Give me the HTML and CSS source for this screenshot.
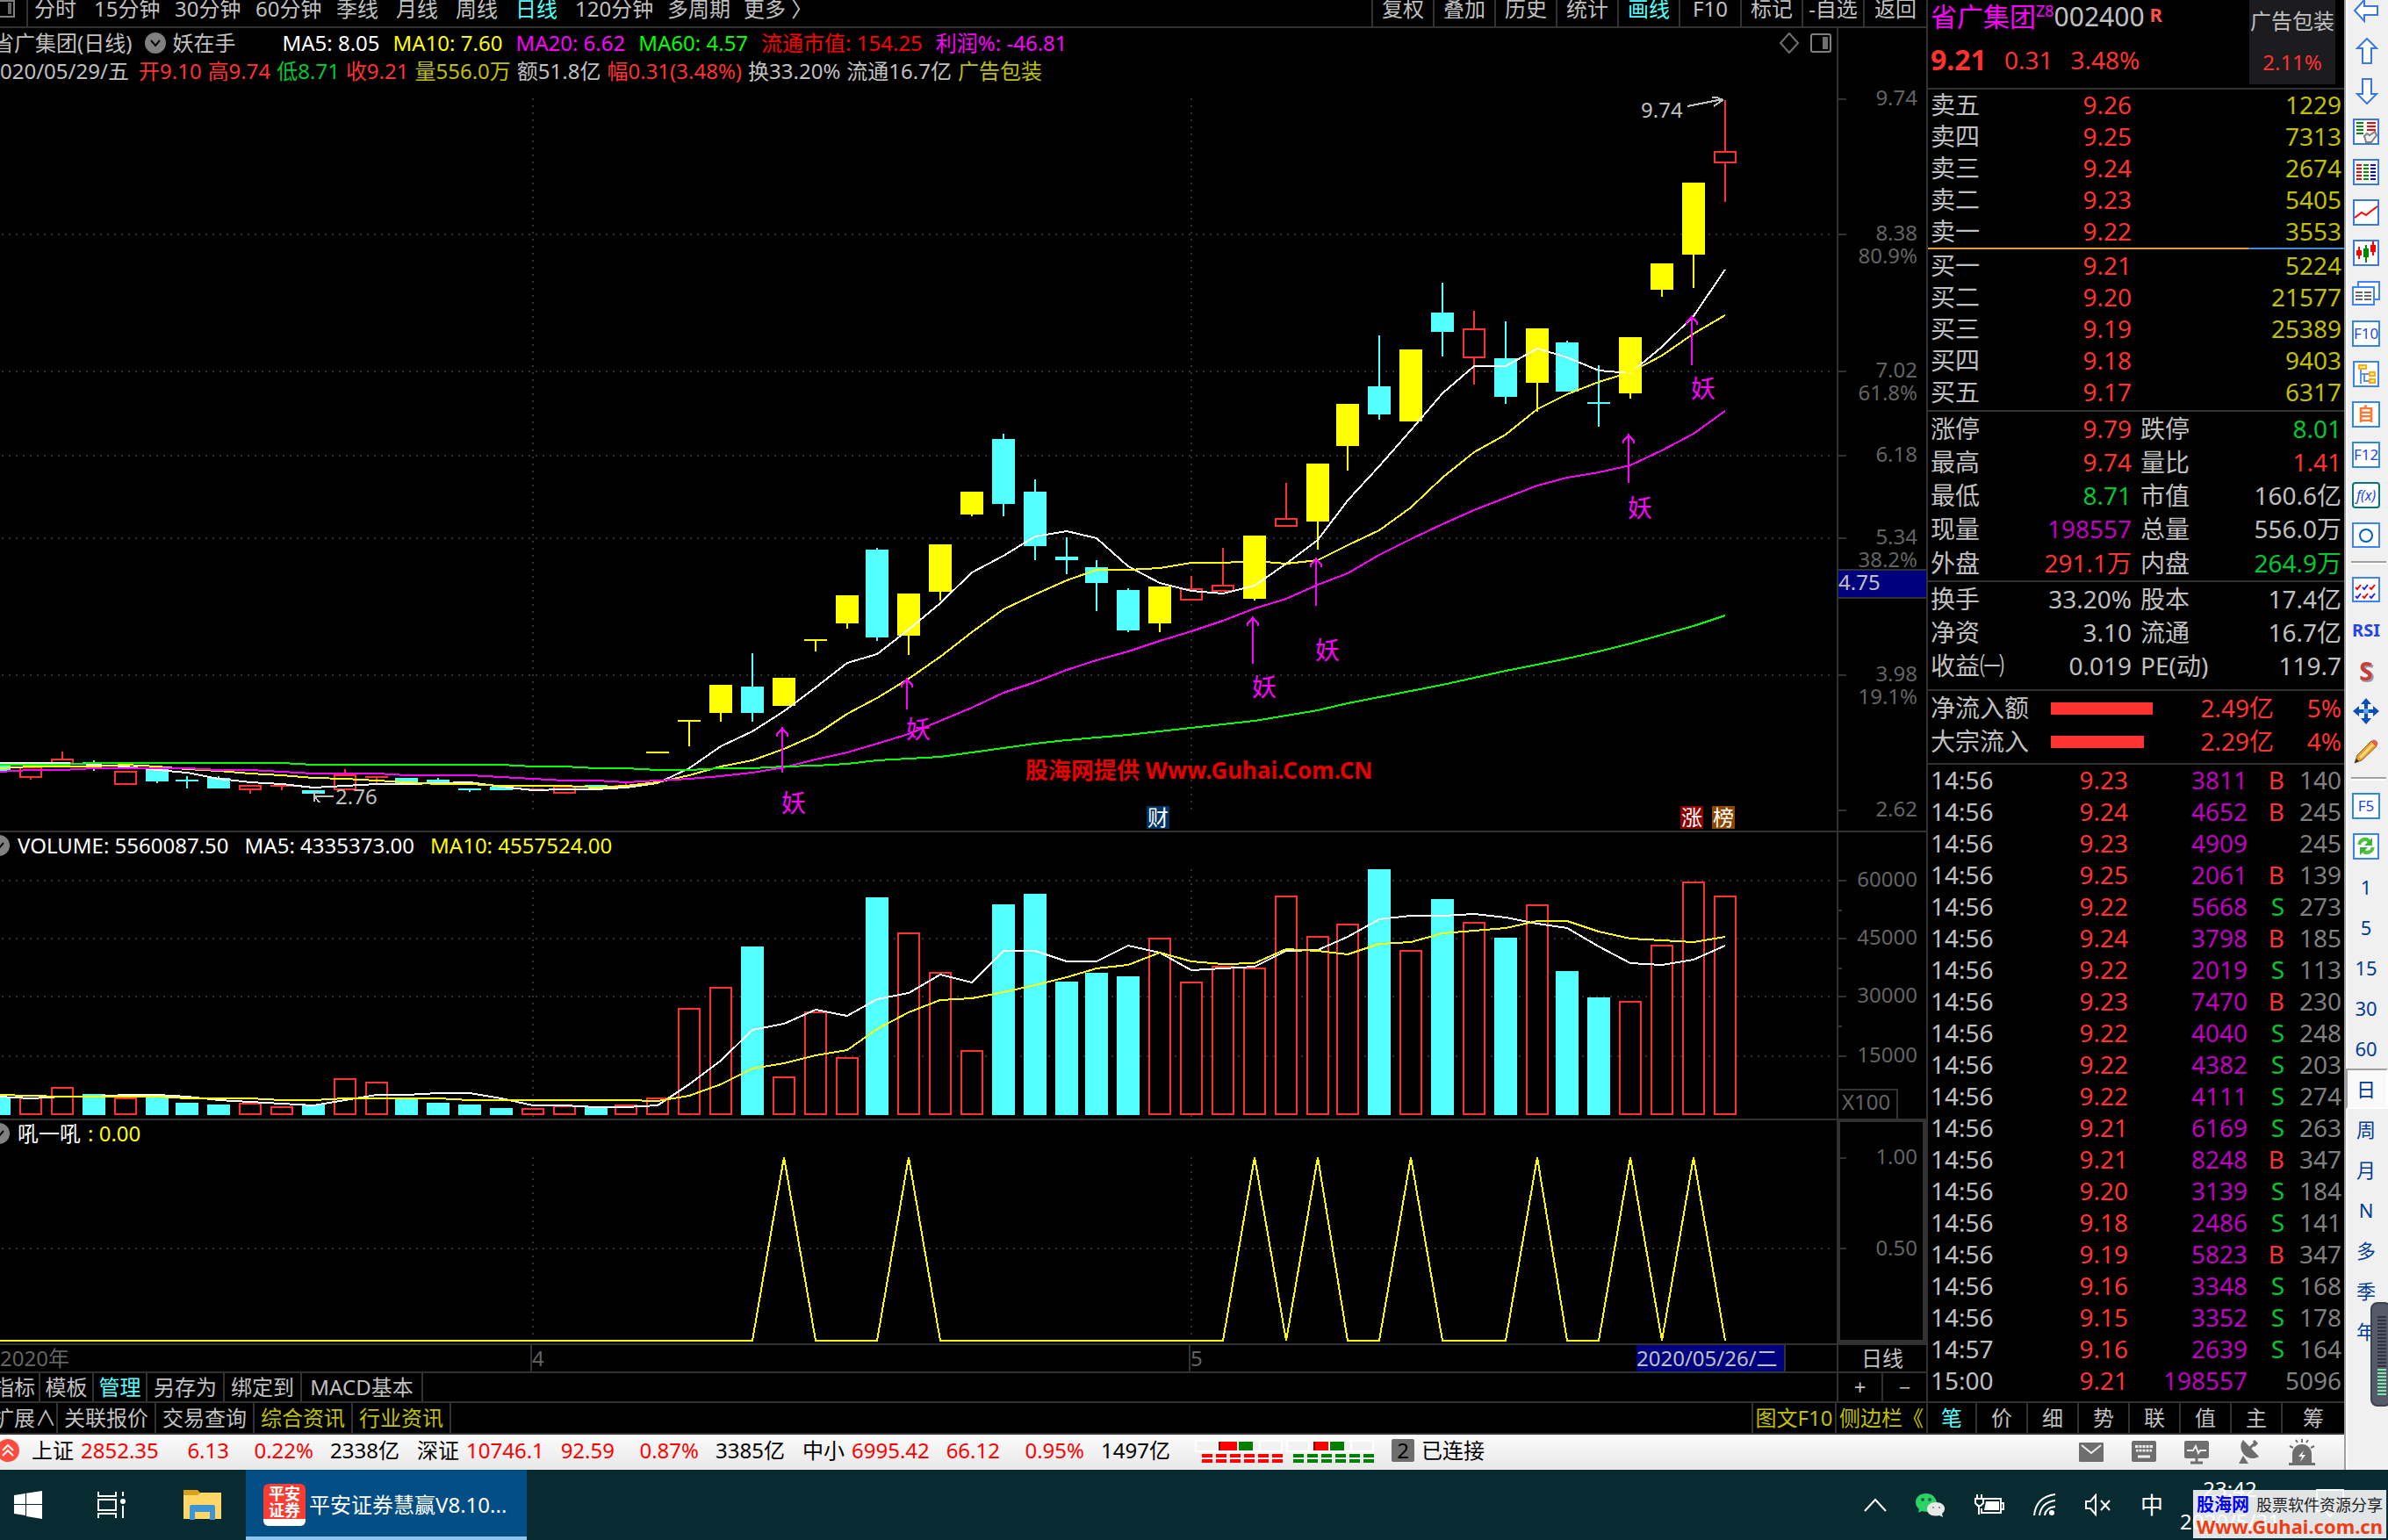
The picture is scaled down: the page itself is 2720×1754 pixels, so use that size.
FILE: index.html
```html
<!DOCTYPE html>
<html lang="zh-CN">
<head>
<meta charset="utf-8">
<title>平安证券慧赢 - 省广集团 002400</title>
<link rel="stylesheet" href="styles.css">
</head>
<body>
<div class="app">
  <main class="chart-area">
    <nav class="topbar">
      <button class="layout-btn" aria-label="布局"><svg width="18" height="22" viewBox="0 0 18 22"><path d="M0 1H16V19H0" fill="none" stroke="#808080" stroke-width="2"/><rect x="9" y="3" width="4" height="13" fill="#666"/></svg></button>
      <div class="periods">
        <button class="w2">分时</button><button class="w4">15分钟</button><button class="w4">30分钟</button><button class="w4">60分钟</button><button class="w2">季线</button><button class="w2">月线</button><button class="w2">周线</button><button class="w2 on">日线</button><button class="w5">120分钟</button><button class="w3">多周期</button><button class="w3">更多 〉</button>
      </div>
      <div class="tools">
        <button>复权</button><button>叠加</button><button>历史</button><button>统计</button><button class="on">画线</button><button>F10</button><button>标记</button><button>-自选</button><button>返回</button>
      </div>
    </nav>

    <section class="pane pane-price">
      <div class="plot">
        <div class="info">
          <div class="info-row">
            <span class="stock-name">省广集团(日线)</span>
            <button class="drop" aria-label="指标菜单"><svg width="24" height="24" viewBox="0 0 24 24"><circle cx="12" cy="12" r="12" fill="#808080"/><path d="M7 9l5 6 5-6" fill="none" stroke="#000" stroke-width="2"/></svg></button>
            <span class="ind-name">妖在手</span>
            <span class="c-white">MA5: 8.05</span><span class="c-yellow">MA10: 7.60</span><span class="c-magenta">MA20: 6.62</span><span class="c-lime">MA60: 4.57</span><span class="c-pure-red">流通市值: 154.25</span><span class="c-magenta">利润%: -46.81</span>
            <span class="corner-icons">
              <svg width="24" height="24" viewBox="0 0 24 24"><path d="M12 1L22 12 12 23 2 12Z" fill="none" stroke="#707070" stroke-width="2"/></svg>
              <svg width="24" height="24" viewBox="0 0 24 24"><rect x="1" y="2" width="22" height="20" rx="2" fill="none" stroke="#808080" stroke-width="2"/><rect x="14" y="5" width="6" height="14" fill="#707070"/></svg>
            </span>
          </div>
          <div class="info-row quote-row">
            <span class="quote-date">020/05/29/五</span><span class="c-red">开9.10</span><span class="c-red">高9.74</span><span class="c-green">低8.71</span><span class="c-red">收9.21</span><span class="c-olive">量556.0万</span><span>额51.8亿</span><span class="c-red">幅0.31(3.48%)</span><span>换33.20%</span><span>流通16.7亿</span><span class="c-olive">广告包装</span>
          </div>
        </div>
        <svg id="price" class="graph" viewBox="0 97 2092 849"></svg>
      </div>
      <svg id="price-axis" class="axis" viewBox="2092 32 102 914"></svg>
    </section>

    <section class="pane pane-volume">
      <div class="plot">
        <div class="sub-head">
          <button class="drop drop-cut" aria-label="成交量菜单"><svg width="24" height="24" viewBox="0 0 24 24"><circle cx="12" cy="12" r="12" fill="#808080"/><path d="M7 9l5 6 5-6" fill="none" stroke="#000" stroke-width="2"/></svg></button>
          <span class="c-white">VOLUME: 5560087.50</span><span class="c-white">MA5: 4335373.00</span><span class="c-yellow">MA10: 4557524.00</span>
        </div>
        <svg id="volume" class="graph" viewBox="0 978 2092 296"></svg>
      </div>
      <svg id="volume-axis" class="axis" viewBox="2092 948 102 326"></svg>
    </section>

    <section class="pane pane-signal">
      <div class="plot">
        <div class="sub-head">
          <button class="drop drop-cut" aria-label="信号菜单"><svg width="24" height="24" viewBox="0 0 24 24"><circle cx="12" cy="12" r="12" fill="#808080"/><path d="M7 9l5 6 5-6" fill="none" stroke="#000" stroke-width="2"/></svg></button>
          <span class="signal-name">吼一吼</span><span class="c-yellow">: 0.00</span>
        </div>
        <svg id="signal" class="graph" viewBox="0 1306 2092 224"></svg>
      </div>
      <svg id="signal-axis" class="axis" viewBox="2092 1276 102 254"></svg>
    </section>

    <div class="dates">
      <span class="year">2020年</span><span class="month m4">4</span><span class="month m5">5</span><span class="cursor-date">2020/05/26/二</span><span class="date-rest"></span><button class="scale-name">日线</button>
    </div>
    <div class="strip">
      <button class="k1"><span class="cut">指标</span></button><button class="k2">模板</button><button class="k2 on">管理</button><button class="k3">另存为</button><button class="k3">绑定到</button><button class="k5">MACD基本</button>
      <span class="grow"></span><button class="zoom-btn">+</button><button class="zoom-btn">−</button>
    </div>
    <div class="strip strip-last">
      <button class="k15"><span class="cut">扩展∧</span></button><button class="k4">关联报价</button><button class="k4">交易查询</button><button class="k4 c-olive">综合资讯</button><button class="k4 c-olive">行业资讯</button>
      <span class="grow"></span><button class="kf c-olive">图文F10</button><button class="ks c-olive">侧边栏《</button>
    </div>
  </main>

  <aside class="panel">
    <header class="quote-head">
      <div class="quote-main">
        <div class="quote-title"><span class="c-magenta">省广集团</span><sup class="c-magenta">Z8</sup><span>002400</span><b>R</b></div>
        <div class="quote-price"><strong>9.21</strong><span>0.31</span><span>3.48%</span></div>
      </div>
      <div class="sector"><span>广告包装</span><span class="c-red">2.11%</span></div>
    </header>
    <table class="book sell">
      <tr><th>卖五</th><td>9.26</td><td>1229</td></tr>
      <tr><th>卖四</th><td>9.25</td><td>7313</td></tr>
      <tr><th>卖三</th><td>9.24</td><td>2674</td></tr>
      <tr><th>卖二</th><td>9.23</td><td>5405</td></tr>
      <tr><th>卖一</th><td>9.22</td><td>3553</td></tr>
    </table>
    <div class="ratio"><span></span></div>
    <table class="book buy">
      <tr><th>买一</th><td>9.21</td><td>5224</td></tr>
      <tr><th>买二</th><td>9.20</td><td>21577</td></tr>
      <tr><th>买三</th><td>9.19</td><td>25389</td></tr>
      <tr><th>买四</th><td>9.18</td><td>9403</td></tr>
      <tr><th>买五</th><td>9.17</td><td>6317</td></tr>
    </table>
    <table class="facts">
      <tr><th>涨停</th><td class="c-red">9.79</td><th>跌停</th><td class="c-green">8.01</td></tr>
      <tr><th>最高</th><td class="c-red">9.74</td><th>量比</th><td class="c-red">1.41</td></tr>
      <tr><th>最低</th><td class="c-green">8.71</td><th>市值</th><td>160.6亿</td></tr>
      <tr><th>现量</th><td class="c-purple">198557</td><th>总量</th><td>556.0万</td></tr>
      <tr><th>外盘</th><td class="c-red">291.1万</td><th>内盘</th><td class="c-green">264.9万</td></tr>
    </table>
    <table class="facts facts-more">
      <tr><th>换手</th><td>33.20%</td><th>股本</th><td>17.4亿</td></tr>
      <tr><th>净资</th><td>3.10</td><th>流通</th><td>16.7亿</td></tr>
      <tr><th>收益㈠</th><td>0.019</td><th>PE(动)</th><td>119.7</td></tr>
    </table>
    <table class="flows">
      <tr><th>净流入额</th><td><span class="bar" style="width:116px"></span></td><td>2.49亿</td><td>5%</td></tr>
      <tr><th>大宗流入</th><td><span class="bar" style="width:106px"></span></td><td>2.29亿</td><td>4%</td></tr>
    </table>
    <table class="ticks">
      <tr><td>14:56</td><td>9.23</td><td>3811</td><td class="b">B</td><td>140</td></tr>
      <tr><td>14:56</td><td>9.24</td><td>4652</td><td class="b">B</td><td>245</td></tr>
      <tr><td>14:56</td><td>9.23</td><td>4909</td><td></td><td>245</td></tr>
      <tr><td>14:56</td><td>9.25</td><td>2061</td><td class="b">B</td><td>139</td></tr>
      <tr><td>14:56</td><td>9.22</td><td>5668</td><td class="s">S</td><td>273</td></tr>
      <tr><td>14:56</td><td>9.24</td><td>3798</td><td class="b">B</td><td>185</td></tr>
      <tr><td>14:56</td><td>9.22</td><td>2019</td><td class="s">S</td><td>113</td></tr>
      <tr><td>14:56</td><td>9.23</td><td>7470</td><td class="b">B</td><td>230</td></tr>
      <tr><td>14:56</td><td>9.22</td><td>4040</td><td class="s">S</td><td>248</td></tr>
      <tr><td>14:56</td><td>9.22</td><td>4382</td><td class="s">S</td><td>203</td></tr>
      <tr><td>14:56</td><td>9.22</td><td>4111</td><td class="s">S</td><td>274</td></tr>
      <tr><td>14:56</td><td>9.21</td><td>6169</td><td class="s">S</td><td>263</td></tr>
      <tr><td>14:56</td><td>9.21</td><td>8248</td><td class="b">B</td><td>347</td></tr>
      <tr><td>14:56</td><td>9.20</td><td>3139</td><td class="s">S</td><td>184</td></tr>
      <tr><td>14:56</td><td>9.18</td><td>2486</td><td class="s">S</td><td>141</td></tr>
      <tr><td>14:56</td><td>9.19</td><td>5823</td><td class="b">B</td><td>347</td></tr>
      <tr><td>14:56</td><td>9.16</td><td>3348</td><td class="s">S</td><td>168</td></tr>
      <tr><td>14:56</td><td>9.15</td><td>3352</td><td class="s">S</td><td>178</td></tr>
      <tr><td>14:57</td><td>9.16</td><td>2639</td><td class="s">S</td><td>164</td></tr>
      <tr><td>15:00</td><td>9.21</td><td>198557</td><td></td><td>5096</td></tr>
    </table>
    <nav class="panel-tabs">
      <button class="on">笔</button><button>价</button><button>细</button><button>势</button><button>联</button><button>值</button><button>主</button><button>筹</button>
    </nav>
  </aside>

  <footer class="status">
    <svg class="alert" width="22" height="26" viewBox="0 0 22 26"><circle cx="9" cy="13" r="13" fill="#ff4b3e"/><path d="M3 13l6-6 6 6M3 19l6-6 6 6" fill="none" stroke="#fff" stroke-width="2"/></svg>
    <div class="index"><span>上证</span><span class="up">2852.35</span><span class="up">6.13</span><span class="up">0.22%</span><span>2338亿</span></div>
    <div class="index"><span>深证</span><span class="up">10746.1</span><span class="up">92.59</span><span class="up">0.87%</span><span>3385亿</span></div>
    <div class="index"><span>中小</span><span class="up">6995.42</span><span class="up">66.12</span><span class="up">0.95%</span><span>1497亿</span></div>
    <svg class="meter" width="204" height="28" viewBox="0 0 204 28">
      <g fill="#f2f2f2" stroke="#fff" stroke-width="2"><rect x="1" y="1" width="98" height="12"/><rect x="105" y="1" width="98" height="12"/></g>
      <path d="M26 1v12M74 1v12M130 1v12M178 1v12" stroke="#fff" stroke-width="2"/>
      <rect x="27" y="2" width="2" height="10" fill="#800000"/><rect x="29" y="2" width="19" height="10" fill="#f00"/><rect x="50" y="2" width="16" height="10" fill="#008000"/>
      <rect x="135" y="2" width="2" height="10" fill="#800000"/><rect x="137" y="2" width="15" height="10" fill="#f00"/><rect x="154" y="2" width="16" height="10" fill="#008000"/>
      <path d="M8 18h92M8 24h92" stroke="#f00" stroke-width="4" stroke-dasharray="12 4"/>
      <path d="M112 18h92M112 24h92" stroke="#008000" stroke-width="4" stroke-dasharray="12 4"/>
    </svg>
    <span class="count">2</span><span>已连接</span>
    <div class="status-icons">
      <button aria-label="邮件"><svg width="28" height="28" viewBox="0 0 28 28"><rect y="3" width="28" height="22" rx="1" fill="#6e6e6e"/><path d="M3 6l11 9 11-9" fill="none" stroke="#eee" stroke-width="2"/></svg></button>
      <button aria-label="键盘"><svg width="28" height="28" viewBox="0 0 28 28"><rect y="1" width="28" height="24" rx="2" fill="#6e6e6e"/><path d="M4 7.500h20M5 12h18M7 19h14" stroke="#eee" stroke-width="3"/><path d="M4 10h20M8 6v8M12 6v8M16 6v8M20 6v8" stroke="#6e6e6e"/></svg></button>
      <button aria-label="行情监控"><svg width="28" height="28" viewBox="0 0 28 28"><rect y="1" width="28" height="20" rx="2" fill="#6e6e6e"/><path d="M3 12h7l3-5 3 8 2-3h7" fill="none" stroke="#eee" stroke-width="2"/><path d="M14 20v6M7 26h14" stroke="#6e6e6e" stroke-width="3"/></svg></button>
      <button aria-label="接收器"><svg width="28" height="28" viewBox="0 0 28 28"><path d="M7 0C-1 9 10 27 25 19Z" fill="#6e6e6e"/><path d="M14 10l6-6M19 1l3 3-3 3" fill="none" stroke="#6e6e6e" stroke-width="3"/><path d="M7 18L2 27h11z" fill="#6e6e6e"/></svg></button>
      <button aria-label="预警"><svg width="30" height="30" viewBox="0 0 30 30"><path d="M4 28V17a11 11 0 0 1 22 0v11z" fill="#6e6e6e"/><path d="M0 28.500h30" stroke="#6e6e6e" stroke-width="3"/><path d="M15 0v4M8 1l2 3M22 1l-2 3M1 8l4 2M29 8l-4 2" stroke="#6e6e6e" stroke-width="2"/><path d="M17 13l-6 7h4l-2 6 6-8h-4z" fill="#fff"/></svg></button>
    </div>
  </footer>

  <nav class="side">
    <button aria-label="后退"><svg width="30" height="30" viewBox="0 0 30 30"><path d="M2 15L13 3v7h15v10H13v7z" fill="#fff" stroke="#3a78dc" stroke-width="2"/></svg></button>
    <button aria-label="上翻"><svg width="30" height="30" viewBox="0 0 30 30"><path d="M16 1L27 12h-6v17H11V12H5z" fill="#fff" stroke="#3a78dc" stroke-width="2"/></svg></button>
    <button aria-label="下翻"><svg width="30" height="30" viewBox="0 0 30 30"><path d="M16 29L27 18h-6V1H11v17H5z" fill="#fff" stroke="#3a78dc" stroke-width="2"/></svg></button>
    <button aria-label="自选报价"><svg width="30" height="30" viewBox="0 0 30 30"><rect x="1" y="1" width="28" height="28" fill="#fff" stroke="#3a78dc" stroke-width="2"/><path d="M4 5h8M4 9h8M4 13h8M4 17h8" stroke="#080" stroke-width="2"/><path d="M16 5h10M16 9h10M16 13h10" stroke="#f00" stroke-width="2"/><path d="M13 20l3-3 3 2 6-4 2 4-6 8h-6z" fill="#eee" stroke="#808080" stroke-width="2"/></svg></button>
    <button aria-label="行情列表"><svg width="30" height="30" viewBox="0 0 30 30"><rect x="1" y="1" width="28" height="28" fill="#fff" stroke="#3a78dc" stroke-width="2"/><path d="M4 7h6M4 11h6M4 15h6M4 19h6M4 23h6" stroke="#f00" stroke-width="2"/><path d="M12 7h6M12 11h6M12 15h6M12 19h6M12 23h6" stroke="#080" stroke-width="2"/><path d="M20 7h6M20 11h6M20 15h6M20 19h6M20 23h6" stroke="#00f" stroke-width="2"/></svg></button>
    <button aria-label="分时图"><svg width="30" height="30" viewBox="0 0 30 30"><rect x="1" y="1" width="28" height="28" fill="#fff" stroke="#3a78dc" stroke-width="2"/><path d="M2 21l8-6 5 3 5-4 8-6" fill="none" stroke="#f00" stroke-width="2"/></svg></button>
    <button aria-label="K线图"><svg width="30" height="30" viewBox="0 0 30 30"><rect x="1" y="1" width="28" height="28" fill="#fff" stroke="#3a78dc" stroke-width="2"/><path d="M7 8v14M23 2v16" stroke="#f00" stroke-width="2"/><path d="M4 12h6v6H4zM20 6h6v8h-6z" fill="#f00"/><path d="M15 6v20" stroke="#080" stroke-width="2"/><path d="M12 10h6v10h-6z" fill="#080"/></svg></button>
    <button aria-label="资料"><svg width="32" height="30" viewBox="0 0 32 30"><rect x="7" y="2" width="24" height="20" fill="#fff" stroke="#3f82ff" stroke-width="2"/><rect x="1" y="8" width="24" height="20" fill="#fff" stroke="#3f82ff" stroke-width="2"/><path d="M4 14h8M4 18h8M4 22h8M14 14h8M14 18h8M14 22h8" stroke="#666" stroke-width="2"/></svg></button>
    <button class="boxed">F10</button>
    <button aria-label="板块树"><svg width="30" height="30" viewBox="0 0 30 30"><rect x="1" y="1" width="28" height="28" fill="#fff" stroke="#3a82f0" stroke-width="2"/><path d="M9 10v16M10 15h8M13 15v8h5" fill="none" stroke="#5a90f0" stroke-width="2"/><path d="M7 5h8v4H7zM19 13h6v4h-6zM19 21h6v4h-6z" fill="#ffff60" stroke="#ffa824" stroke-width="2"/></svg></button>
    <button class="boxed orange">自</button>
    <button class="boxed">F12</button>
    <button class="boxed teal">f(x)</button>
    <button aria-label="圈选"><svg width="32" height="30" viewBox="0 0 32 30"><rect x="1" y="1" width="30" height="27" fill="#fff" stroke="#3f82ff" stroke-width="2"/><circle cx="16" cy="15" r="7" fill="none" stroke="#0060c0" stroke-width="2"/></svg></button>
    <hr>
    <button aria-label="多图"><svg width="32" height="30" viewBox="0 0 32 30"><rect x="1" y="1" width="30" height="27" fill="#fff" stroke="#3f82ff" stroke-width="2"/><g fill="none" stroke-width="2"><path d="M4 12l2 2 4-5M20 12l2 2 4-5M12 22l2 2 4-5" stroke="#f00"/><path d="M12 12l2 2 4-5M4 22l2 2 4-5M20 22l2 2 4-5" stroke="#22f"/></g></svg></button>
    <button class="rsi">RSI</button>
    <button class="dollar">S</button>
    <button aria-label="移动"><svg width="30" height="30" viewBox="0 0 30 30"><path d="M15 0l6 7h-4v6h6V9l7 6-7 6v-4h-6v6h4l-6 7-6-7h4v-6H7v4l-7-6 7-6v4h6V7H9z" fill="#0a50b8"/><circle cx="15" cy="15" r="3" fill="#6af"/></svg></button>
    <button aria-label="画笔"><svg width="30" height="30" viewBox="0 0 30 30"><path d="M2 28l3-9L21 3l6 6L10 25z" fill="#e8a030" stroke="#8a6420"/><path d="M8 22L23 7" stroke="#ffd880" stroke-width="3"/><path d="M21 3q3-3 6 0t0 6z" fill="#e06060"/><path d="M2 28l2-5 3 3z" fill="#333"/></svg></button>
    <hr>
    <button class="boxed">F5</button>
    <button aria-label="刷新"><svg width="30" height="30" viewBox="0 0 30 30"><rect x="1" y="1" width="28" height="28" fill="#fff" stroke="#3a82f0" stroke-width="2"/><path d="M7 13q2-7 9-6l3 3M23 16q-2 7-9 6l-3-3" fill="none" stroke="#52c040" stroke-width="4"/><path d="M22 5v9h-9zM8 25v-9h9z" fill="#3cb43c"/></svg></button>
    <button>1</button><button>5</button><button>15</button><button>30</button><button>60</button>
    <button class="pressed">日</button><button>周</button><button>月</button><button>N</button><button>多</button><button>季</button><button>年</button>
    <div class="gauge"><i></i><i></i></div>
  </nav>
</div>

<footer class="taskbar">
  <button class="tb" aria-label="开始"><svg width="32" height="32" viewBox="0 0 32 32"><path d="M0 5l13-2v12H0zM14 2.800L32 0v15H14zM0 16h13v12L0 26zM14 16h18v16l-18-3z" fill="#fff"/></svg></button>
  <button class="tb tb-view" aria-label="任务视图"><svg width="34" height="30" viewBox="0 0 34 30"><g fill="none" stroke="#fff" stroke-width="2"><path d="M1 0v5h20V0M1 30v-5h20v5M1 9h20v12H1zM29 0v5M29 16v14"/></g><circle cx="29" cy="11" r="3" fill="#fff"/></svg></button>
  <button class="tb tb-files" aria-label="文件资源管理器"><svg width="44" height="36" viewBox="0 0 44 36"><path d="M1 1h16l4 4h21q2 0 2 2v27H1z" fill="#d9a215"/><path d="M1 7h16l4-3h23v30H1z" fill="#ffd767"/><path d="M8 35V20q0-2 2-2h25q2 0 2 2v15h-6v-9H14v9z" fill="#3d95d8"/></svg></button>
  <button class="task"><span class="app-icon"><span>平安</span><span>证券</span><small></small></span>平安证券慧赢V8.10...</button>
  <div class="tray">
    <svg width="26" height="16" viewBox="0 0 26 16"><path d="M1 15L13 2l12 13" fill="none" stroke="#fff" stroke-width="2"/></svg>
    <svg width="34" height="28" viewBox="0 0 34 28"><path d="M12 1C5 1 0 5 0 11c0 4 2 6 4 8l-1 4 4-2c12 3 18-4 17-10C23 5 18 1 12 1z" fill="#2bd366"/><path d="M23 11c-6 0-10 3-10 8s5 9 14 7l4 2-1-4c6-5 3-13-7-13z" fill="#e8e8e8"/><g fill="#156b38"><circle cx="8" cy="8" r="2"/><circle cx="16" cy="8" r="2"/></g><g fill="#777"><circle cx="20" cy="17" r="1"/><circle cx="27" cy="17" r="1"/></g></svg>
    <svg width="34" height="26" viewBox="0 0 34 26"><path d="M8 6h22v16H8V17M30 11h3v7h-3" fill="none" stroke="#fff" stroke-width="2"/><path d="M13 9h15v10H11z" fill="#fff"/><path d="M3 1v5M8 1v5M1 6h9v5l-3 3H4l-3-3zM5 14v10" fill="none" stroke="#fff" stroke-width="2"/></svg>
    <svg width="26" height="26" viewBox="0 0 26 26"><g fill="none" stroke="#fff" stroke-width="2"><path d="M1 25Q3 4 25 1M7 25Q9 10 25 8M13 25q1-9 12-10"/></g><circle cx="21" cy="22" r="3" fill="#fff"/></svg>
    <svg width="30" height="26" viewBox="0 0 30 26"><path d="M1 9h5l6-7v22l-6-7H1zM18 8l10 11M28 8L18 19" fill="none" stroke="#fff" stroke-width="2"/></svg>
    <span class="ime">中</span>
    <div class="clock"><span>23:42</span><span>2020/5/31</span></div>
    <svg class="notice" width="32" height="36" viewBox="0 0 32 36"><path d="M1 1h30v24H21l-5 6-5-6H1z" fill="none" stroke="#fff" stroke-width="2"/></svg>
  </div>
  <a class="site-badge" href="#"><span class="site-top"><b>股海网</b><span>股票软件资源分享</span></span><strong>Www.Guhai.com.cn</strong></a>
</footer>
<script src="chart.js"></script>
</body>
</html>
```

FILE: styles.css
```css
* { box-sizing: border-box; margin: 0; padding: 0; }

body {
  min-height: 100vh;
  background: #000;
  color: #c0c0c0;
  font: 24px/32px "Noto Sans", "Noto Sans CJK SC", sans-serif;
  overflow-x: hidden;
}

button {
  font: inherit;
  color: inherit;
  background: none;
  border: 0;
  white-space: nowrap;
}

svg { display: block; flex: none; }
table { border-collapse: collapse; table-layout: fixed; width: 100%; }
th { font-weight: 400; text-align: left; }

.c-white { color: #fff; }
.c-yellow { color: #ff0; }
.c-magenta { color: #f0f; }
.c-purple { color: #c000c0; }
.c-lime { color: #0f0; }
.c-green { color: #00c832; }
.c-red { color: #ff3232; }
.c-pure-red { color: #f00; }
.c-olive { color: #c0c000; }
.on { color: #54ffff; }

.app {
  display: grid;
  grid-template-columns: minmax(0, 1fr) 476px 50px;
  grid-template-rows: auto 40px;
}
.chart-area { display: flex; flex-direction: column; min-width: 0; }

/* top menu */
.topbar {
  display: flex;
  height: 32px;
  border-bottom: 2px solid #323232;
  overflow: hidden;
}
.topbar button { line-height: 20px; height: 30px; padding-bottom: 10px; }
.layout-btn { width: 32px; border-right: 2px solid #323232; }
.periods { display: flex; padding-left: 7px; }
.periods button { text-align: left; }
.w2 { width: 68px; }
.w3 { width: 87px; }
.w4 { width: 92px; }
.w5 { width: 105px; }
.tools { display: flex; margin-left: auto; }
.tools button { width: 70px; border-left: 2px solid #323232; }
.tools button:last-child { width: 72px; }

/* chart panes */
.pane {
  display: grid;
  grid-template-columns: minmax(0, 1fr) 102px;
  border-bottom: 2px solid #323232;
}
.graph, .axis { width: 100%; height: auto; }
.graph text, .axis text { font-size: 24px; }
.info { padding-top: 1px; }
.info-row { display: flex; align-items: center; height: 32px; gap: 15px; white-space: nowrap; }
.stock-name { margin-left: -8px; }
.ind-name { width: 110px; margin-left: -8px; }
.drop { height: 24px; }
.drop-cut { margin-left: -13px; margin-right: -9px; }
.corner-icons { display: flex; gap: 12px; margin-left: auto; padding-right: 6px; }
.quote-row { gap: 7px; }
.quote-date { width: 151px; }
.sub-head { display: flex; align-items: center; height: 30px; gap: 18px; white-space: nowrap; }
.signal-name { margin-right: -10px; color: #fff; }

/* date scale and tool strips */
.dates { display: flex; height: 32px; line-height: 30px; border-bottom: 2px solid #323232; color: #646464; }
.year { width: 604px; }
.month { border-left: 2px solid #323232; }
.m4 { width: 750px; }
.m5 { width: 510px; }
.cursor-date { width: 168px; color: #c0c0c0; background: #00007f; white-space: nowrap; overflow: hidden; }
.date-rest { flex: 1; border-left: 2px solid #323232; }
.scale-name { width: 102px; border-left: 2px solid #323232; color: #c0c0c0; }
.strip { display: flex; height: 34px; line-height: 32px; border-bottom: 2px solid #323232; }
.strip-last { height: 36px; line-height: 34px; }
.strip button { border-right: 2px solid #323232; overflow: hidden; }
.strip .cut { display: block; margin-left: -8px; text-align: left; }
.grow { flex: 1; }
.k1 { width: 46px; }
.k2 { width: 61px; }
.k3 { width: 88px; }
.k5 { width: 138px; }
.k15 { width: 66px; }
.k4 { width: 112px; }
.strip .zoom-btn { width: 51px; border-left: 2px solid #323232; border-right: 0; }
.strip .kf { width: 97px; border-left: 2px solid #323232; }
.strip .ks { width: 102px; border-right: 0; }

/* quote panel */
.panel {
  display: flex;
  flex-direction: column;
  border-left: 2px solid #323232;
  font-size: 28px;
}
.quote-head {
  display: flex;
  justify-content: space-between;
  height: 102px;
  padding-left: 3px;
  border-bottom: 2px solid #323232;
}
.quote-title { display: flex; height: 44px; line-height: 38px; font-size: 30px; }
.quote-title sup { font-size: 18px; line-height: 24px; }
.quote-title b { margin-left: 6px; color: #ff5050; font-size: 22px; line-height: 32px; }
.quote-price { display: flex; gap: 20px; line-height: 48px; color: #ff3232; }
.quote-price strong { font-size: 32px; }
.sector {
  display: flex;
  flex-direction: column;
  align-items: center;
  width: 98px;
  height: 96px;
  margin-right: 10px;
  background: #1c1c1f;
  font-size: 24px;
  line-height: 47px;
  white-space: nowrap;
}
.panel th, .panel td { padding-bottom: 2px; line-height: 34px; white-space: nowrap; }
.panel td { text-align: right; }
.panel th { padding-left: 3px; }
.panel td:last-child { padding-right: 3px; }
.buy { margin: 1px 0 2px; }
.book th { width: 60px; }
.book td:nth-child(2) { width: 172px; color: #ff3232; }
.book td:last-child { color: #c0c000; }
.ratio { height: 2px; background: #3d8ed8; }
.ratio span { display: block; width: 77%; height: 2px; background: #e69b2e; }
.panel .facts th, .panel .facts td, .panel .flows th, .panel .flows td { padding-bottom: 0; line-height: 38px; }
.facts, .flows { border-top: 2px solid #323232; }
.facts th:first-child { width: 100px; }
.facts td:nth-child(2) { width: 132px; }
.facts th:nth-child(3) { width: 104px; padding-left: 10px; }
.facts tr:last-child { height: 40px; }
.facts-more tr:last-child { height: 46px; vertical-align: top; }
.flows tr:last-child { height: 44px; vertical-align: top; }
.flows th { width: 140px; }
.flows td { color: #ff3232; }
.flows td:nth-child(2) { width: 122px; text-align: left; }
.flows td:nth-child(3) { width: 132px; }
.bar { display: inline-block; height: 14px; background: #ff3232; vertical-align: 3px; }
.ticks { border-top: 2px solid #323232; }
.ticks tr { height: 36px; }
.ticks td:nth-child(1) { width: 90px; padding-left: 3px; text-align: left; }
.ticks td:nth-child(2) { width: 138px; color: #ff3232; }
.ticks td:nth-child(3) { width: 136px; color: #c000c0; }
.ticks td:nth-child(4) { width: 42px; }
.ticks td:last-child { color: #808080; }
.ticks .b { color: #ff3232; }
.ticks .s { color: #00c832; }
.panel-tabs {
  display: grid;
  grid-template-columns: 56px repeat(6, 58px) 1fr;
  height: 38px;
  margin-top: auto;
  border-top: 2px solid #323232;
  border-bottom: 2px solid #323232;
  font-size: 24px;
}
.panel-tabs button { border-right: 2px solid #323232; }
.panel-tabs button:last-child { border-right: 0; }

/* index status bar */
.status {
  grid-column: 1 / 3;
  display: flex;
  align-items: center;
  height: 40px;
  padding-bottom: 4px;
  background: linear-gradient(#fcfcfc, #e8e8e8);
  color: #000;
}
.alert { margin-right: 14px; }
.index { display: grid; grid-template-columns: 56px 95px 74px 96px 100px; column-gap: 0; width: 439px; white-space: nowrap; }
.index span:nth-child(3), .index span:nth-child(4) { text-align: right; }
.index span:nth-child(5) { padding-left: 19px; }
.up { color: #f00; }
.meter { margin: 4px 20px 0 8px; }
.count { width: 26px; height: 26px; margin-right: 8px; border-radius: 2px; background: #6e6e6e; line-height: 26px; text-align: center; }
.status-icons { display: flex; margin: 4px 18px 0 auto; }
.status-icons button { display: grid; place-items: center; width: 60px; height: 32px; }

/* right tool column */
.side {
  grid-column: 3;
  grid-row: 1 / 3;
  position: relative;
  display: flex;
  flex-direction: column;
  background: #f0f0f0;
  border-left: 2px solid #a0a0a0;
  box-shadow: inset 2px 0 #fff;
  color: #003c96;
  font-size: 22px;
  overflow: hidden;
}
.side button { display: grid; place-items: center; flex: none; width: 48px; height: 46px; padding-right: 2px; }
.side button:first-child { margin-top: -11px; }
.side hr { flex: none; height: 4px; margin: 6px 2px 6px 6px; border: 0; border-top: 2px solid #a0a0a0; border-bottom: 2px solid #fff; }
.side .boxed { width: 32px; height: 30px; margin: 8px 7px; padding: 0; border: 2px solid #2f86ef; background: #fff; color: #1e46dc; font-size: 17px; line-height: 24px; }
.side .orange { color: #ff7832; font-weight: 700; font-size: 20px; }
.side .teal { border-color: #007878; border-radius: 4px; font-style: italic; font-size: 16px; }
.side .rsi { font-weight: 700; font-size: 20px; color: #2346e0; }
.side .dollar { font-weight: 700; font-size: 28px; color: #c83c3c; text-shadow: 2px 2px #999; }
.side .pressed { border: 2px solid #a0a0a0; border-right-color: #fff; border-bottom-color: #fff; background: #f9f9f9; }
.gauge {
  position: absolute;
  right: -4px;
  top: 1483px;
  width: 24px;
  height: 119px;
  padding: 14px 4px 14px 6px;
  border: 2px solid #3c414d;
  border-radius: 8px;
  background: #555b68;
}
.gauge i { display: block; height: 60px; background: repeating-linear-gradient(#2e323c 0 2px, transparent 2px 4px); }
.gauge i + i { height: 30px; background: repeating-linear-gradient(#7ee8a8 0 2px, transparent 2px 4px); }

/* desktop taskbar */
.taskbar { position: relative; display: flex; height: 80px; background: #082b31; color: #fff; }
.tb { display: grid; place-items: center; width: 64px; }
.tb-view { width: 128px; }
.tb-files { width: 75px; }
.task { display: flex; align-items: center; gap: 4px; width: 320px; margin-left: 13px; padding: 4px 20px 0; border-bottom: 4px solid #8fc4ee; background: #034e85; }
.app-icon { display: flex; flex-direction: column; align-items: center; width: 48px; height: 48px; padding-top: 2px; border-radius: 6px; background: #fa3c32; font-size: 18px; font-weight: 700; line-height: 19px; overflow: hidden; }
.app-icon small { width: 48px; height: 8px; margin-top: auto; background: #fff; }
.tray { display: flex; align-items: center; gap: 33px; margin-left: auto; padding-right: 50px; }
.ime { font-size: 26px; }
.clock { display: flex; flex-direction: column; align-items: center; width: 114px; margin: 0 8px 0 -14px; line-height: 37px; }
.site-badge {
  position: absolute;
  right: 2px;
  bottom: 2px;
  width: 220px;
  height: 55px;
  padding: 4px;
  background: rgba(255, 255, 255, .88);
  color: #222;
  text-decoration: none;
  white-space: nowrap;
}
.site-top { display: flex; gap: 8px; height: 26px; line-height: 26px; font-size: 18px; }
.site-top b { color: #0000f0; font-size: 20px; }
.site-badge strong { display: block; color: #f03c14; font-size: 22px; line-height: 22px; }
```

FILE: chart.js
```js
const NS = 'http://www.w3.org/2000/svg';
const CYAN = '#54ffff', RED = '#ff3232', YELLOW = '#ffff00', MAGENTA = '#ff00ff', GRID = '#323232', GREY = '#646464';

function add(host, tag, attrs, text) {
  const el = document.createElementNS(NS, tag);
  for (const k in attrs) el.setAttribute(k, attrs[k]);
  if (text) el.textContent = text;
  host.appendChild(el);
  return el;
}
const get = id => document.getElementById(id);
const rect = (s, x, y, w, h, fill) => add(s, 'rect', { x, y, width: w, height: h, fill, 'shape-rendering': 'crispEdges' });
const box = (s, x, y, w, h, stroke) => add(s, 'rect', { x: x + 1, y: y + 1, width: w - 2, height: h - 2, fill: '#000', stroke, 'stroke-width': 2, 'shape-rendering': 'crispEdges' });
const path = (s, d, stroke, extra) => add(s, 'path', Object.assign({ d, fill: 'none', stroke, 'stroke-width': 2, 'shape-rendering': 'crispEdges' }, extra));
const label = (s, x, mid, text, fill, extra) => add(s, 'text', Object.assign({ x, y: mid + 9, fill }, extra), text);
const curve = (s, xs, ys, color) => path(s, 'M' + ys.map((y, i) => xs[i] + ' ' + y).join('L'), color);

const X = [-1, 35, 71, 107, 143, 179, 213, 249, 285, 321, 357, 393, 429, 463, 499, 535, 571, 607, 643, 679, 713, 749, 785, 821, 857, 893, 929, 965, 999, 1035, 1071, 1107, 1143, 1179, 1215, 1249, 1285, 1321, 1357, 1393, 1429, 1465, 1501, 1535, 1571, 1607, 1643, 1679, 1715, 1751, 1785, 1821, 1857, 1893, 1929, 1965];

// kind, wick top, body top, body bottom, wick bottom
const K = [
  ['c', 872, 872, 878, 878], ['r', 873, 873, 886, 888], ['r', 856, 864, 870, 870], ['c', 866, 868, 870, 878],
  ['r', 878, 878, 894, 894], ['c', 876, 876, 890, 892], ['c', 884, 888, 890, 898], ['c', 884, 886, 898, 898],
  ['r', 894, 894, 900, 904], ['r', 894, 894, 896, 900], ['c', 900, 900, 904, 904], ['r', 876, 882, 900, 900],
  ['r', 884, 884, 886, 892], ['c', 886, 886, 892, 892], ['c', 886, 888, 892, 892], ['c', 898, 898, 900, 902],
  ['c', 896, 896, 900, 900], ['r', 898, 898, 900, 900], ['r', 895, 895, 904, 904], ['c', 894, 894, 896, 896],
  ['r', 891, 894, 896, 896], ['y', 856, 856, 858, 858], ['y', 820, 820, 822, 850], ['y', 780, 780, 812, 822],
  ['c', 744, 782, 812, 822], ['y', 772, 772, 804, 804], ['y', 728, 728, 730, 742], ['y', 678, 678, 710, 716],
  ['c', 624, 626, 726, 730], ['y', 676, 676, 724, 746], ['y', 620, 620, 674, 684], ['y', 560, 560, 586, 588],
  ['c', 494, 500, 574, 588], ['c', 546, 560, 622, 638], ['c', 612, 634, 638, 654], ['c', 638, 646, 664, 696],
  ['c', 670, 672, 718, 720], ['y', 668, 668, 710, 720], ['r', 656, 670, 684, 684], ['r', 624, 666, 674, 674],
  ['y', 610, 610, 682, 684], ['r', 550, 590, 600, 600], ['y', 528, 528, 594, 626], ['y', 460, 460, 508, 536],
  ['c', 382, 440, 472, 478], ['y', 398, 398, 480, 480], ['c', 322, 356, 378, 406], ['r', 354, 374, 408, 438],
  ['c', 366, 408, 452, 460], ['y', 374, 374, 436, 469], ['c', 388, 390, 446, 446], ['c', 416, 458, 460, 486],
  ['y', 384, 384, 448, 454], ['y', 300, 300, 330, 338], ['y', 208, 208, 290, 328], ['r', 114, 172, 186, 230]
];
const MA5 = [869, 869, 869, 871, 873, 877, 880, 887, 891, 893, 897, 895, 893, 893, 892, 891, 896, 900, 899, 899, 897, 892, 875, 850, 833, 810, 783, 755, 745, 717, 687, 652, 633, 611, 605, 613, 645, 664, 673, 676, 667, 642, 615, 570, 531, 490, 448, 417, 417, 397, 407, 422, 425, 395, 360, 307];
const MA10 = [875, 873, 873, 873, 871, 873, 876, 878, 881, 883, 886, 887, 889, 891, 893, 893, 895, 895, 895, 897, 895, 891, 883, 873, 866, 853, 837, 813, 795, 773, 748, 720, 694, 677, 661, 649, 649, 647, 641, 641, 639, 642, 638, 621, 604, 578, 544, 515, 495, 466, 449, 435, 424, 405, 380, 359];
const MA20 = [879, 877, 877, 875, 875, 875, 875, 877, 877, 879, 881, 881, 881, 883, 883, 883, 885, 887, 889, 889, 891, 889, 887, 884, 880, 874, 865, 857, 847, 836, 821, 806, 789, 777, 763, 752, 742, 730, 719, 707, 693, 682, 666, 653, 632, 614, 597, 581, 567, 553, 544, 538, 530, 513, 494, 468];
const MA60 = [871, 871, 871, 869, 869, 869, 869, 869, 869, 869, 871, 871, 871, 871, 871, 871, 871, 873, 873, 875, 875, 877, 877, 875, 875, 873, 872, 870, 866, 864, 862, 857, 852, 847, 843, 840, 837, 833, 829, 825, 821, 815, 809, 801, 794, 787, 780, 772, 764, 757, 750, 742, 733, 723, 713, 701];

// volume bar tops; the base line of the pane is 1270
const V = [1250, 1250, 1238, 1246, 1250, 1249, 1256, 1258, 1256, 1260, 1258, 1228, 1232, 1252, 1256, 1258, 1262, 1262, 1259, 1261, 1258, 1250, 1148, 1124, 1078, 1226, 1152, 1204, 1022, 1062, 1107, 1196, 1030, 1018, 1118, 1108, 1112, 1068, 1118, 1100, 1102, 1020, 1066, 1052, 990, 1082, 1024, 1050, 1068, 1030, 1106, 1136, 1140, 1076, 1004, 1020];
const VMA5 = [1249, 1251, 1249, 1249, 1247, 1247, 1249, 1253, 1255, 1257, 1259, 1253, 1247, 1247, 1245, 1245, 1251, 1259, 1259, 1261, 1261, 1259, 1235, 1208, 1173, 1166, 1150, 1157, 1138, 1131, 1110, 1119, 1083, 1083, 1095, 1095, 1077, 1085, 1105, 1103, 1101, 1083, 1082, 1067, 1047, 1043, 1043, 1041, 1045, 1052, 1057, 1078, 1097, 1099, 1093, 1077];
const VMA10 = [1247, 1248, 1249, 1249, 1249, 1249, 1251, 1251, 1251, 1253, 1253, 1251, 1251, 1251, 1251, 1253, 1253, 1253, 1253, 1253, 1253, 1254, 1248, 1235, 1217, 1211, 1202, 1196, 1172, 1153, 1139, 1137, 1130, 1122, 1113, 1103, 1099, 1085, 1095, 1098, 1097, 1081, 1083, 1087, 1075, 1073, 1063, 1060, 1057, 1049, 1049, 1061, 1069, 1071, 1073, 1067];

function grid(s, rows, top, bottom) {
  for (const y of rows) path(s, `M2 ${y}H2090`, GRID, { 'stroke-dasharray': '2 6' });
  for (const x of [607, 1357]) path(s, `M${x} ${top}V${bottom}`, GRID, { 'stroke-dasharray': '2 6' });
}

const price = get('price');
grid(price, [267, 423, 519, 613, 769], 112, 924);
K.forEach(([kind, hi, top, bottom, lo], i) => {
  const x = X[i], color = { c: CYAN, r: RED, y: YELLOW }[kind];
  if (kind === 'r' && bottom - top > 4) {
    if (hi < top) rect(price, x - 1, hi, 2, top - hi, color);
    if (lo > bottom) rect(price, x - 1, bottom, 2, lo - bottom, color);
    box(price, x - 13, top, 26, bottom - top, color);
  } else {
    rect(price, x - 1, hi, 2, lo - hi, color);
    rect(price, x - 13, top, 26, bottom - top, color);
  }
});
curve(price, X, MA5, '#ffffff');
curve(price, X, MA10, YELLOW);
curve(price, X, MA20, MAGENTA);
curve(price, X, MA60, '#00ff00');

// arrow x, arrow top, arrow bottom, middle of the caption
[[891, 828, 880, 916], [1033, 772, 808, 832], [1427, 702, 756, 784], [1499, 635, 690, 742], [1855, 494, 550, 580], [1927, 359, 416, 444]].forEach(([x, top, bottom, mid]) => {
  path(price, `M${x} ${top}V${bottom}M${x - 6} ${top + 11}V${top + 8}L${x} ${top + 2}L${x + 6} ${top + 8}V${top + 11}`, MAGENTA);
  label(price, x - 1, mid, '妖', MAGENTA, { style: 'font-size:28px' });
});
label(price, 1869, 125, '9.74', '#c0c0c0');
path(price, 'M1922 121L1962 113M1950 111H1956L1962 114L1952 121', '#c0c0c0');
label(price, 382, 907, '2.76', '#c0c0c0');
path(price, 'M380 907H358M358 913V903H364M358 907L364 914', '#c0c0c0');
label(price, 1168, 878, '股海网提供 Www.Guhai.Com.CN', '#e60000', { style: 'font-size:26px;font-weight:700' });
[[1306, '财', '#003264'], [1914, '涨', '#8c0000'], [1950, '榜', '#8c4600']].forEach(([x, t, bg]) => {
  rect(price, x, 918, 26, 26, bg);
  label(price, x + 1, 931, t, '#fff');
});

const volume = get('volume');
grid(volume, [1003, 1069, 1135, 1203], 990, 1272);
V.forEach((top, i) => {
  if (K[i][0] === 'c') rect(volume, X[i] - 13, top, 26, 1270 - top, CYAN);
  else box(volume, X[i] - 13, top, 26, 1270 - top, RED);
});
curve(volume, X, VMA5, '#ffffff');
curve(volume, X, VMA10, YELLOW);

const signal = get('signal');
grid(signal, [1422], 1318, 1524);
const peaks = [893, 1035, 1429, 1501, 1607, 1751, 1857, 1929];
curve(signal, X, X.map(x => peaks.includes(x) ? 1318 : 1527), YELLOW);

function axis(id, top, bottom, labels, ticks) {
  const s = get(id);
  rect(s, 2092, top, 2, bottom - top, GRID);
  for (const y of ticks) rect(s, 2094, y - 1, 9, 2, GRID);
  for (const [y, t] of labels) label(s, 2184, y, t, GREY, { 'text-anchor': 'end' });
  return s;
}
const pa = axis('price-axis', 32, 946,
  [[111, '9.74'], [265, '8.38'], [291, '80.9%'], [421, '7.02'], [447, '61.8%'], [517, '6.18'], [611, '5.34'], [637, '38.2%'], [767, '3.98'], [793, '19.1%'], [921, '2.62']],
  [113, 267, 423, 519, 613, 769, 923]);
rect(pa, 2092, 648, 102, 34, GRID);
rect(pa, 2094, 650, 100, 30, '#00007f');
label(pa, 2094, 663, '4.75', '#c0c0c0');

const va = axis('volume-axis', 948, 1274, [[1001, '60000'], [1067, '45000'], [1133, '30000'], [1201, '15000']], [1003, 1069, 1135, 1203]);
for (const y of [1037, 1103, 1169]) rect(va, 2094, y - 1, 4, 2, GRID);
box(va, 2092, 1240, 70, 36, GRID);
label(va, 2098, 1255, 'X100', GREY);

const sa = axis('signal-axis', 1276, 1530, [[1317, '1.00'], [1421, '0.50']], []);
add(sa, 'rect', { x: 2094, y: 1276, width: 98, height: 252, fill: 'none', stroke: GRID, 'stroke-width': 4 });
for (const y of [1319, 1422]) rect(sa, 2096, y - 1, 7, 2, GRID);
```
